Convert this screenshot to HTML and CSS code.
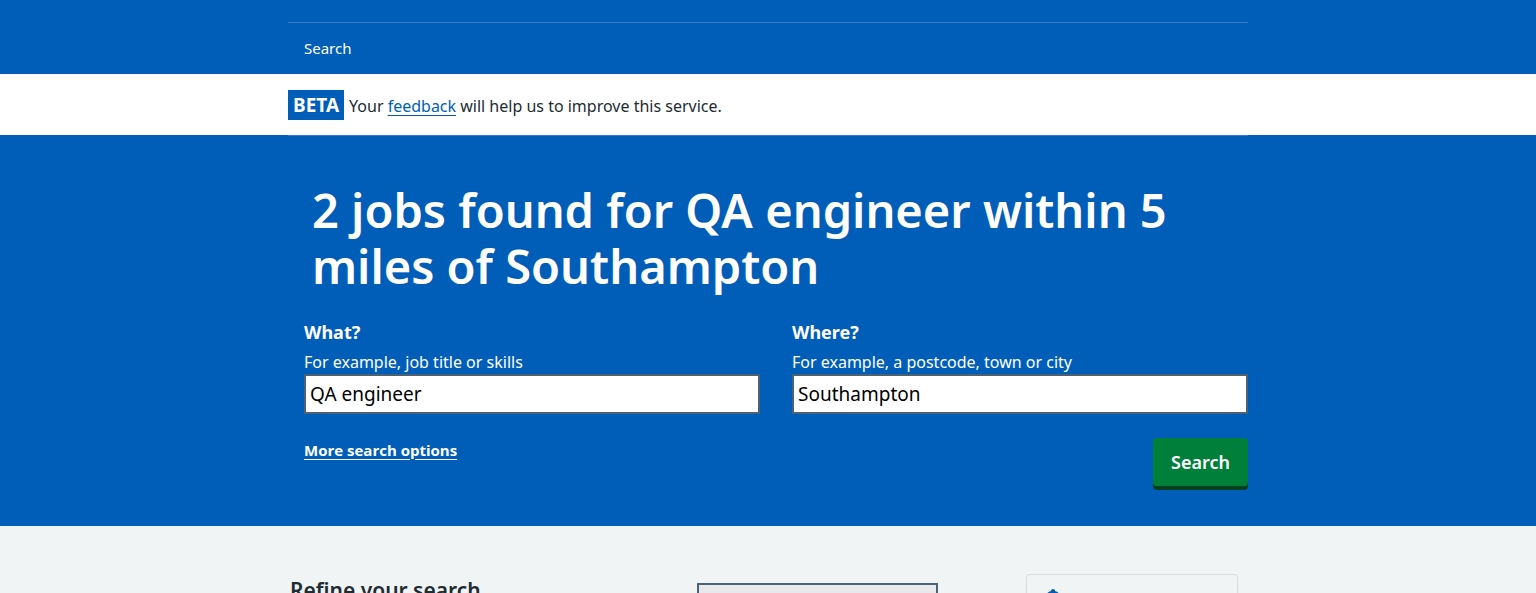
FILE: index.html
```html
<!DOCTYPE html>
<html lang="en">
<head>
<meta charset="utf-8">
<meta name="viewport" content="width=device-width, initial-scale=1">
<title>Search results</title>
<link rel="stylesheet" href="styles.css">
</head>
<body>
<header class="header">
  <nav class="container nav" aria-label="Primary">
    <a class="nav-link" href="#">Search</a>
  </nav>
</header>
<div class="beta">
  <div class="container beta-row">
    <strong class="tag">BETA</strong>
    <p class="beta-text">Your <a class="link" href="#">feedback</a> will help us to improve this service.</p>
  </div>
</div>
<section class="hero">
  <div class="container hero-inner">
    <h1 class="title">2 jobs found for QA engineer within 5 miles of Southampton</h1>
    <form class="form">
      <div class="fields">
        <div class="field">
          <label class="label" for="what">What?</label>
          <span class="hint" id="what-hint">For example, job title or skills</span>
          <input class="input" id="what" type="text" value="QA engineer" aria-describedby="what-hint">
        </div>
        <div class="field">
          <label class="label" for="where">Where?</label>
          <span class="hint" id="where-hint">For example, a postcode, town or city</span>
          <input class="input" id="where" type="text" value="Southampton" aria-describedby="where-hint">
        </div>
      </div>
      <div class="actions">
        <a class="more" href="#">More search options</a>
        <button class="button" type="submit">Search</button>
      </div>
    </form>
  </div>
</section>
<main class="results">
  <div class="container results-row">
    <h2 class="refine">Refine your search</h2>
    <select class="sort" aria-label="Sort results"></select>
    <aside class="alert">
      <svg class="bell" viewBox="0 0 24 24" width="24" height="24" aria-hidden="true"><path fill="#005eb8" d="M10 2C10 .8 10.800 0 12 0s2 .8 2 2c3.500.8 5.500 3.600 5.500 7v5.500l2.500 4H2l2.500-4V9c0-3.400 2-6.200 5.500-7zM9 20h6a3 3 0 0 1-6 0z"/></svg>
    </aside>
  </div>
</main>
</body>
</html>
```
FILE: styles.css
```css
* { box-sizing: border-box; }
body {
  margin: 0;
  height: 100vh;
  display: flex;
  flex-direction: column;
  background: #f0f4f5;
  color: #212b32;
  font-family: "Noto Sans", "Open Sans", sans-serif;
  font-size: 16px;
  line-height: 24px;
}
h1, h2, p { margin: 0; }
.container { width: 100%; max-width: 960px; margin: 0 auto; }
.header { background: #005eb8; padding-top: 22px; }
.nav { display: flex; border-top: 1px solid #337ec6; padding: 0 16px; }
.nav-link { color: #fff; font-size: 15px; padding: 13px 0 14px; text-decoration: none; }
.beta { background: #fff; padding: 16px 0 15px; }
.beta-row { display: flex; align-items: center; gap: 5px; }
.tag { background: #005eb8; color: #fff; font-size: 19px; font-weight: 700; line-height: 30px; padding: 0 5px; }
.beta-text { padding-top: 2px; }
.link { color: #005eb8; text-underline-offset: 3px; }
.hero { background: #005eb8; }
.hero-inner { border-top: 1px solid #337ec6; padding: 46px 0 36px 16px; }
.title { color: #fff; font-size: 47px; font-weight: 600; line-height: 56px; padding: 0 8px; }
.form { color: #fff; padding-top: 24px; }
.fields { display: grid; grid-template-columns: 1fr 1fr; gap: 32px; }
.field { display: flex; flex-direction: column; }
.label { font-size: 18px; font-weight: 700; line-height: 28px; }
.hint { padding-top: 4px; }
.input { width: 100%; height: 40px; margin: 0; padding: 4px; border: 2px solid #4c6272; border-radius: 0; background: #fff; color: #000; font-family: inherit; font-size: 19px; }
.actions { display: flex; justify-content: space-between; align-items: flex-start; padding-top: 24px; }
.more { color: #fff; font-family: "Open Sans", sans-serif; font-size: 15px; font-weight: 700; text-underline-offset: 3px; }
.button { margin: 0 0 4px; padding: 10px 18px; border: 0; border-radius: 4px; background: #007f3b; box-shadow: 0 4px 0 #00401e; color: #fff; font-family: inherit; font-size: 18px; font-weight: 600; line-height: 28px; }
.results { flex: 1; min-height: 0; overflow: hidden; padding-top: 48px; }
.results-row { display: grid; grid-template-columns: 1fr 241px 212px; column-gap: 88px; align-items: start; padding: 0 10px 0 2px; }
.refine { font-size: 21px; font-weight: 600; line-height: 32px; }
.sort { height: 40px; margin-top: 9px; border: 2px solid #4c6272; border-radius: 0; background: #e8e8ed; appearance: none; }
.alert { border: 1px solid #d8dde0; border-radius: 4px; padding: 14px; }
.bell { display: block; }
```
